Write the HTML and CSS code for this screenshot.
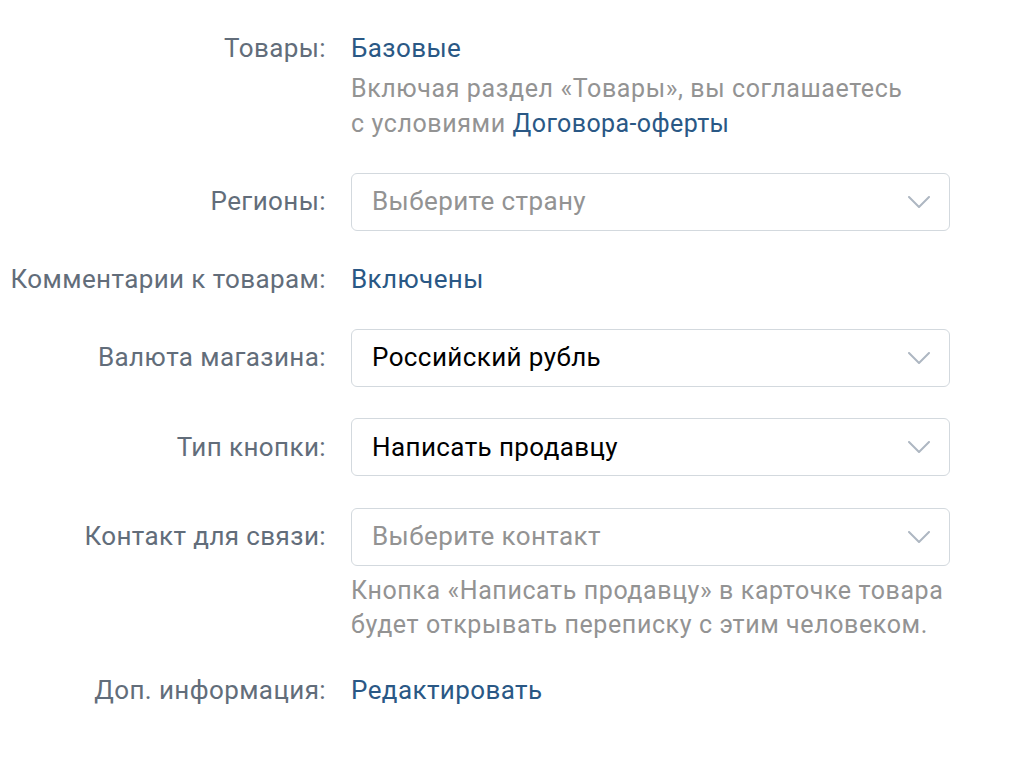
FILE: index.html
```html
<!DOCTYPE html>
<html lang="ru">
<head>
    <meta charset="utf-8">
    <title>Товары</title>
    <link rel="stylesheet" href="styles.css">
</head>
<body>
    <div class="settings">
        <div class="row">
            <div class="label">Товары:</div>
            <div class="value">
                <a class="link" href="#">Базовые</a>
                <div class="hint hint-top">Включая раздел «Товары», вы соглашаетесь<br>с условиями <a class="link" href="#">Договора-оферты</a></div>
            </div>
        </div>

        <div class="row">
            <div class="label">Регионы:</div>
            <div class="value">
                <div class="select placeholder">Выберите страну<span class="chevron"><svg width="22" height="12" viewBox="0 0 22 12"><path d="M1 1l10 10L21 1" fill="none" stroke="currentColor" stroke-width="2" stroke-linecap="round" stroke-linejoin="round"/></svg></span></div>
            </div>
        </div>

        <div class="row">
            <div class="label">Комментарии к товарам:</div>
            <div class="value"><a class="link" href="#">Включены</a></div>
        </div>

        <div class="row">
            <div class="label">Валюта магазина:</div>
            <div class="value">
                <div class="select">Российский рубль<span class="chevron"><svg width="22" height="12" viewBox="0 0 22 12"><path d="M1 1l10 10L21 1" fill="none" stroke="currentColor" stroke-width="2" stroke-linecap="round" stroke-linejoin="round"/></svg></span></div>
            </div>
        </div>

        <div class="row">
            <div class="label">Тип кнопки:</div>
            <div class="value">
                <div class="select">Написать продавцу<span class="chevron"><svg width="22" height="12" viewBox="0 0 22 12"><path d="M1 1l10 10L21 1" fill="none" stroke="currentColor" stroke-width="2" stroke-linecap="round" stroke-linejoin="round"/></svg></span></div>
            </div>
        </div>

        <div class="row">
            <div class="label">Контакт для связи:</div>
            <div class="value">
                <div class="select placeholder">Выберите контакт<span class="chevron"><svg width="22" height="12" viewBox="0 0 22 12"><path d="M1 1l10 10L21 1" fill="none" stroke="currentColor" stroke-width="2" stroke-linecap="round" stroke-linejoin="round"/></svg></span></div>
                <div class="hint hint-bottom">Кнопка «Написать продавцу» в карточке товара<br>будет открывать переписку с этим человеком.</div>
            </div>
        </div>

        <div class="row">
            <div class="label">Доп. информация:</div>
            <div class="value"><a class="link" href="#">Редактировать</a></div>
        </div>
    </div>
</body>
</html>
```

FILE: styles.css
```css
body {
    margin: 0;
    background: #ffffff;
    font-family: Roboto, "Noto Sans", sans-serif;
    font-size: 26px;
    line-height: 35px;
    letter-spacing: 0.4px;
}

.settings {
    display: flex;
    flex-direction: column;
    gap: 31.5px;
    padding-top: 31px;
}

.row {
    display: flex;
    align-items: baseline;
    gap: 25px;
}

.label {
    width: 326px;
    flex-shrink: 0;
    text-align: right;
    color: #626d7a;
}

.value {
    width: 599px;
}

.link {
    color: #2a5885;
    text-decoration: none;
    letter-spacing: 0.4px;
}

.hint {
    color: #939393;
    font-size: 25px;
    letter-spacing: 0.6px;
}

.hint-top {
    margin-top: 5px;
}

.hint-bottom {
    margin-top: 8px;
    line-height: 34px;
}

.select {
    position: relative;
    height: 58px;
    padding: 10.5px 60px 10.5px 20px;
    box-sizing: border-box;
    border: 1px solid #d3d9de;
    border-radius: 6px;
    color: #000000;
}

.select.placeholder {
    color: #939393;
}

.chevron {
    position: absolute;
    right: 19px;
    top: 22px;
    display: flex;
    color: #aeb7c2;
}
```
